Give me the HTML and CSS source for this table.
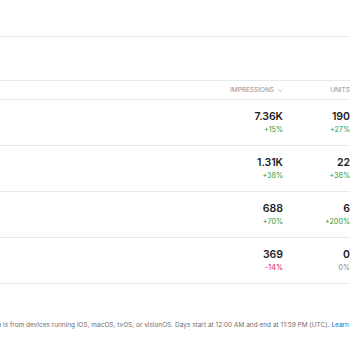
FILE: index.html
```html
<!DOCTYPE html>
<html>
<head>
<meta charset="utf-8">
<link rel="stylesheet" href="styles.css">
</head>
<body>
<div class="page">
  <div class="topbar"></div>
  <div class="toolbar"></div>
  <div class="table">
    <div class="row head">
      <div class="cell name"></div>
      <div class="cell num"><span class="th">IMPRESSIONS<svg class="caret" width="5" height="3" viewBox="0 0 5 3"><path d="M0.5 0.5 L2.5 2.5 L4.5 0.5" fill="none" stroke="#a1a1a6" stroke-width="0.8"/></svg></span></div>
      <div class="cell num units"><span class="th">UNITS</span></div>
    </div>
    <div class="row">
      <div class="cell name"></div>
      <div class="cell num"><span class="val">7.36K</span><span class="pct up">+15%</span></div>
      <div class="cell num units"><span class="val">190</span><span class="pct up">+27%</span></div>
    </div>
    <div class="row">
      <div class="cell name"></div>
      <div class="cell num"><span class="val">1.31K</span><span class="pct up">+38%</span></div>
      <div class="cell num units"><span class="val">22</span><span class="pct up">+38%</span></div>
    </div>
    <div class="row">
      <div class="cell name"></div>
      <div class="cell num"><span class="val">688</span><span class="pct up">+70%</span></div>
      <div class="cell num units"><span class="val">6</span><span class="pct up">+200%</span></div>
    </div>
    <div class="row">
      <div class="cell name"></div>
      <div class="cell num"><span class="val">369</span><span class="pct down">-14%</span></div>
      <div class="cell num units"><span class="val">0</span><span class="pct flat">0%</span></div>
    </div>
  </div>
  <div class="footer"><p class="note">Data is from devices running iOS, macOS, tvOS, or visionOS. Days start at 12:00 AM and end at 11:59 PM (UTC). <a class="link">Learn more</a></p></div>
</div>
</body>
</html>
```
FILE: styles.css
```css
* { box-sizing: border-box; }
html, body { margin: 0; padding: 0; background: #fff; }
body { font-family: Inter, "Noto Sans", sans-serif; color: #1d1d1f; width: 350px; height: 350px; overflow: hidden; }
.page { width: 350px; }
.topbar { height: 37px; border-bottom: 1px solid #e8e8ed; }
.toolbar { height: 44px; border-bottom: 1px solid #e8e8ed; }
.table { width: 352px; }
.row { display: grid; grid-template-columns: 1fr 70px 67px; height: 46px; border-bottom: 1px solid #e8e8ed; }
.row.head { height: 19px; }
.cell { display: flex; flex-direction: column; align-items: flex-end; justify-content: center; }
.cell.num { padding-right: 2px; }
.row.head .cell { justify-content: center; }
.th { display: flex; align-items: center; font-size: 6.5px; letter-spacing: 0; color: #8e8e93; white-space: nowrap; }
.caret { margin-left: 4px; margin-right: 0; }
.val { font-size: 10.5px; font-weight: 600; line-height: 13px; }
.pct { font-size: 7.2px; line-height: 10px; margin-top: 2px; }
.up { color: #1e9a3a; }
.down { color: #e3194b; }
.flat { color: #86868b; }
.footer { height: 66px; display: flex; align-items: center; overflow: hidden; justify-content: flex-end; }
.note { margin: 0; font-size: 6.5px; letter-spacing: 0; color: #6e6e73; white-space: nowrap; margin-right: -16.5px; padding-top: 16px; }
.link { color: #0070c9; }
```
